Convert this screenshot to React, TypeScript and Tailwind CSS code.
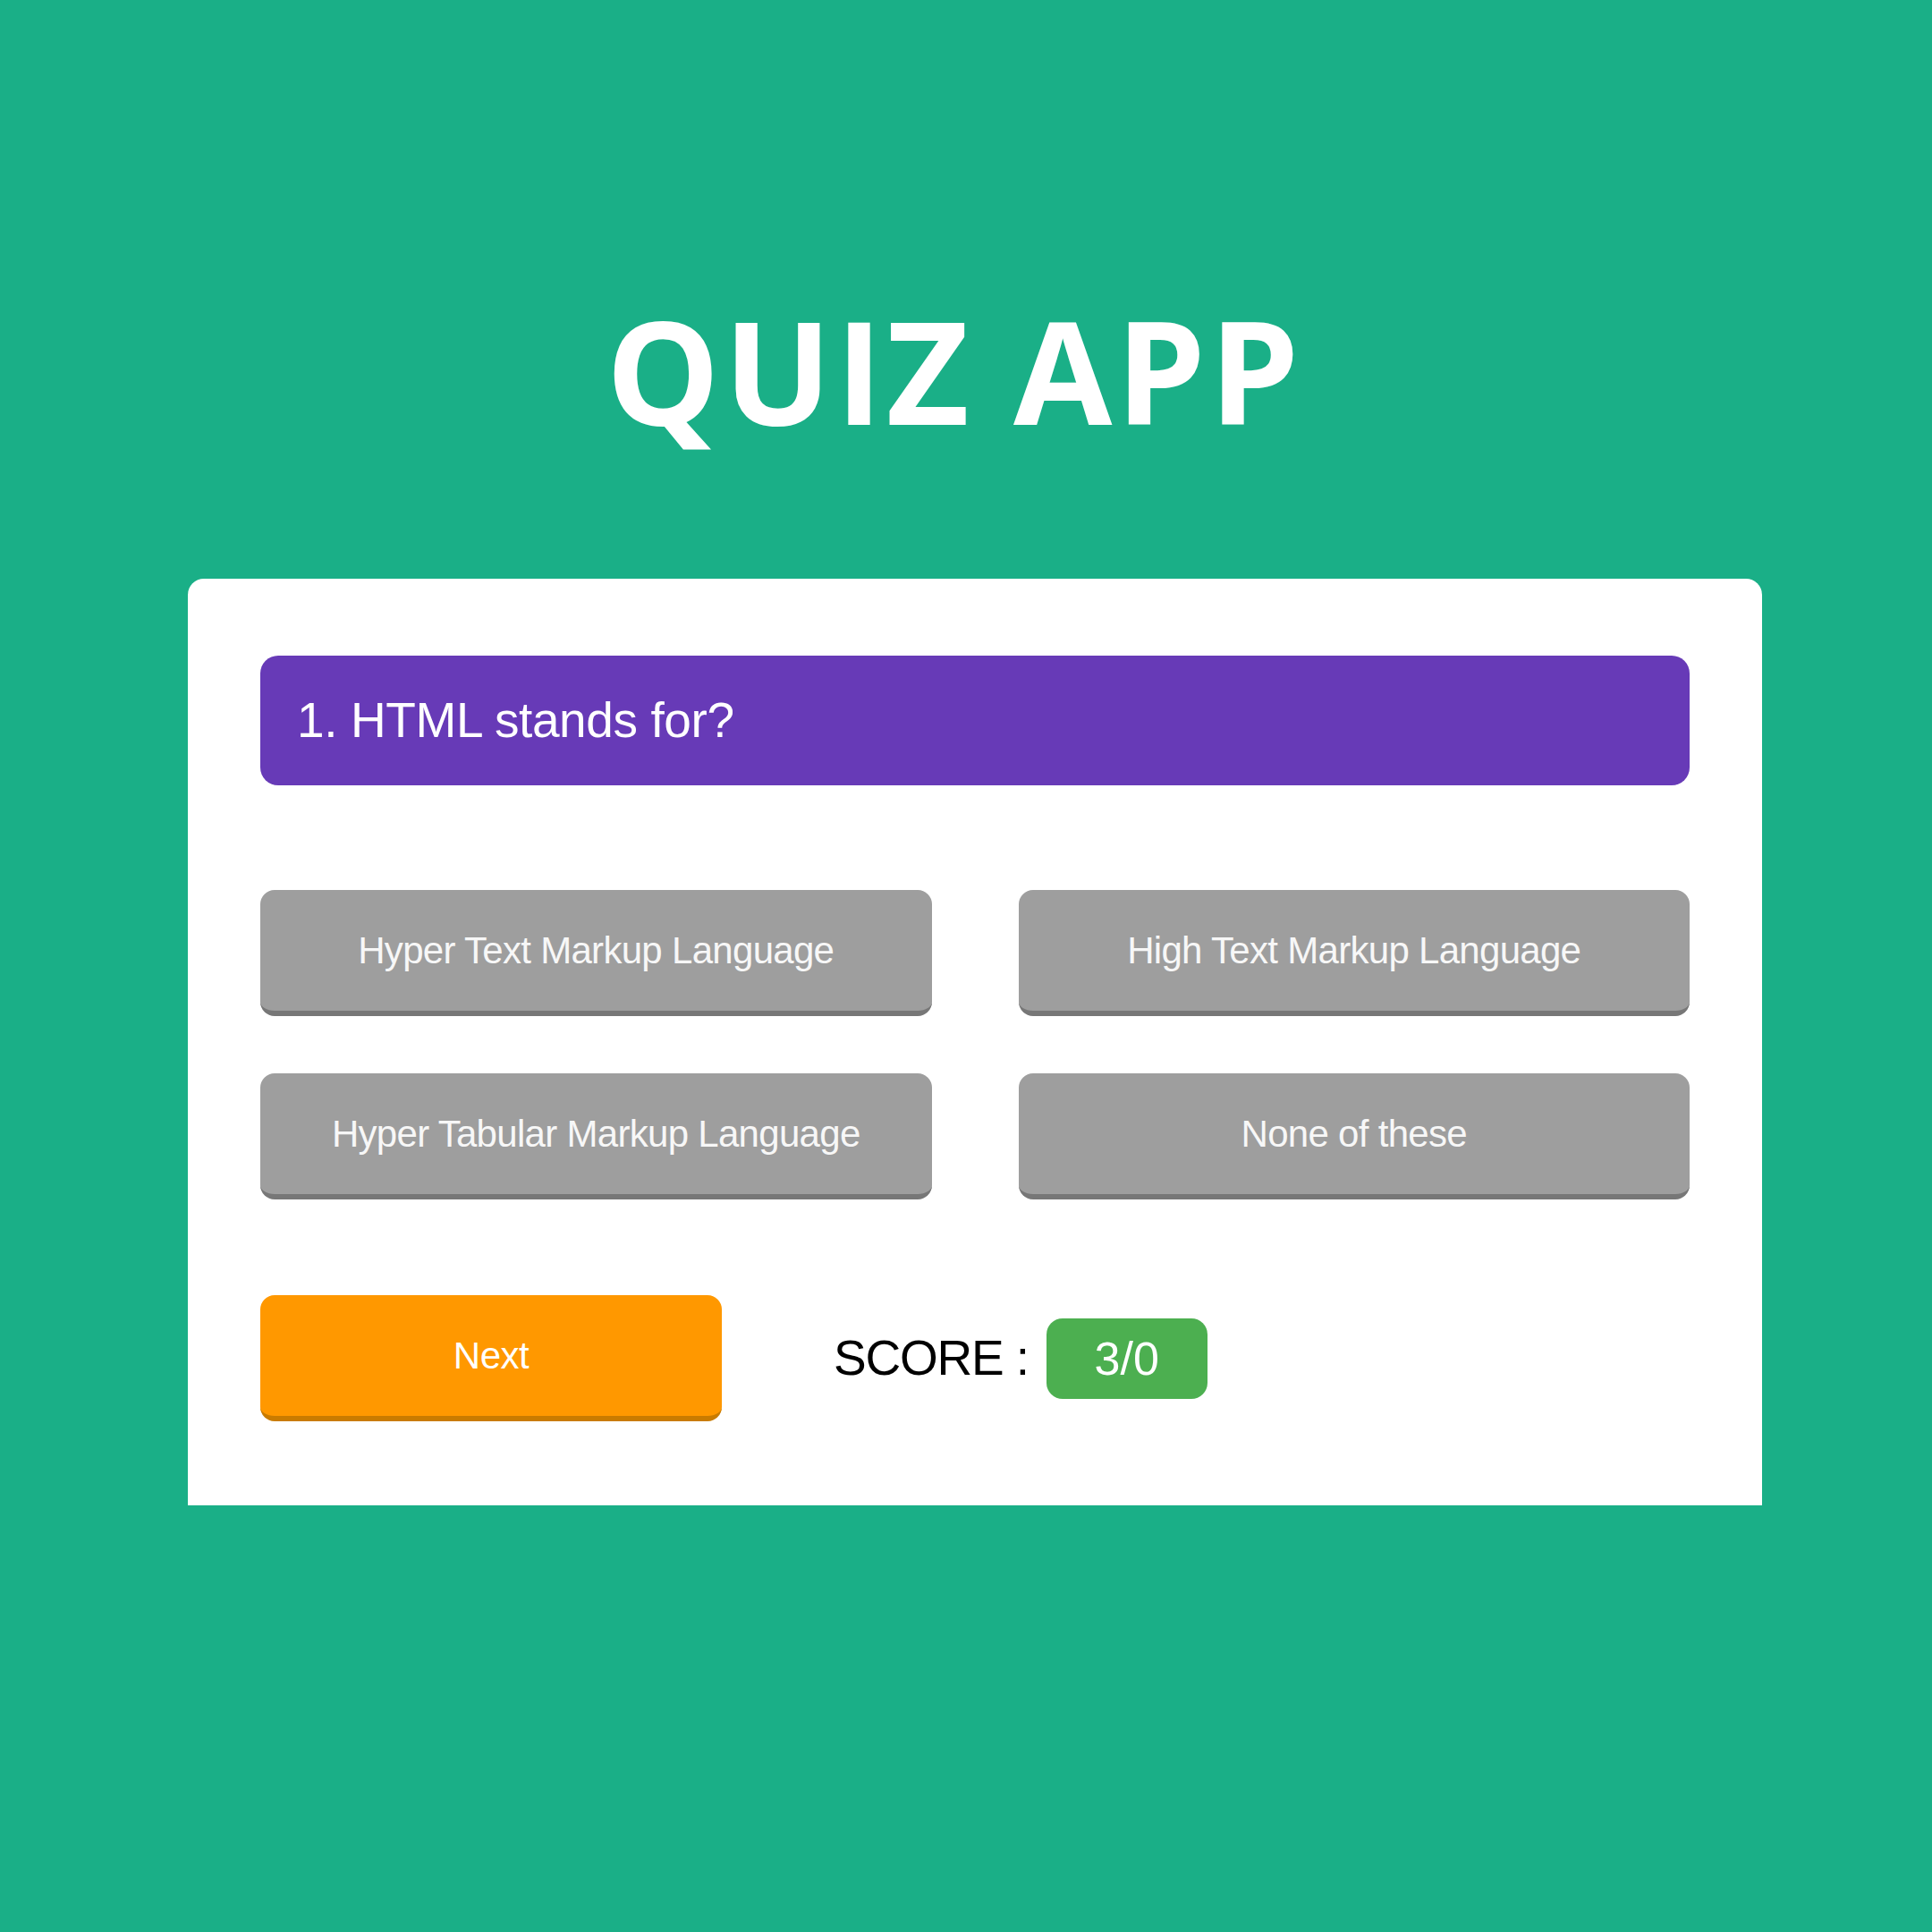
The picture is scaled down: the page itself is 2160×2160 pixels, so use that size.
const options = [
    "Hyper Text Markup Language",
    "High Text Markup Language",
    "Hyper Tabular Markup Language",
    "None of these",
];

const App = () => {
    return (
        <div className="min-h-[2160px] w-full bg-[#1aaf87] pt-[333px] font-['Liberation_Sans',Arial,sans-serif]">
            <h1 className="text-center pr-[26px] font-['Open_Sans',sans-serif] font-bold text-white text-[160px] leading-none tracking-[4px]">
                QUIZ APP
            </h1>

            <div className="ml-[210px] mt-[154px] w-[1760px] h-[1036px] bg-white rounded-t-[18px] px-[81px] pt-[86px]">
                <div className="h-[145px] rounded-[20px] bg-[#673ab7] flex items-center pl-[41px]">
                    <p className="text-white text-[55px] tracking-[-0.4px]">1. HTML stands for?</p>
                </div>

                <div className="mt-[117px] grid grid-cols-2 gap-x-[97px] gap-y-[64px]">
                    {options.map((opt) => (
                        <button
                            key={opt}
                            className="h-[141px] rounded-[16px] bg-[#9e9e9e] border-b-[6px] border-[#777777] text-[#f7f7f7] text-[42px] tracking-[-0.7px] flex items-center justify-center"
                        >
                            {opt}
                        </button>
                    ))}
                </div>

                <div className="mt-[107px] flex items-center">
                    <button className="w-[516px] h-[141px] rounded-[16px] bg-[#ff9800] border-b-[6px] border-[#c97b00] text-white text-[42px] tracking-[-0.5px] flex items-center justify-center">
                        Next
                    </button>
                    <span className="ml-[125px] text-black text-[55px] tracking-[-1.2px]">SCORE :</span>
                    <span className="ml-[20px] w-[180px] h-[90px] rounded-[18px] bg-[#4caf50] text-white text-[52px] flex items-center justify-center">
                        3/0
                    </span>
                </div>
            </div>
        </div>
    );
};

export default App;
